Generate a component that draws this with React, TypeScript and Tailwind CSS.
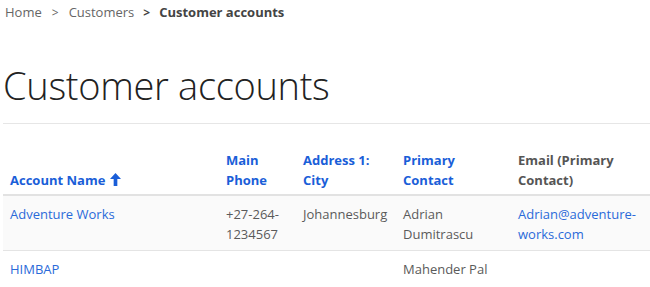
const rows = [
  {
    name: "Adventure Works",
    phone: ["+27-264-", "1234567"],
    city: "Johannesburg",
    contact: ["Adrian", "Dumitrascu"],
    email: ["Adrian@adventure-", "works.com"],
  },
  {
    name: "HIMBAP",
    phone: [],
    city: "",
    contact: ["Mahender Pal"],
    email: [],
  },
];

function SortUpIcon() {
  return (
    <svg viewBox="0 0 12 14" className="inline-block w-[11px] h-[13px] ml-[5px] -mt-[3px] align-middle" fill="currentColor">
      <path d="M6 0 L12 6.5 H8 V14 H4 V6.5 H0 Z" />
    </svg>
  );
}

export default function App() {
  return (
    <div className="w-[650px] h-[287px] overflow-hidden bg-white font-['Open_Sans','Noto_Sans',sans-serif]">
      {/* Breadcrumb */}
      <div className="flex items-center pl-[5px] pt-[3px] text-[13px] text-[#666]">
        <span>Home</span>
        <span className="mx-[10px] text-[12px]">&gt;</span>
        <span>Customers</span>
        <span className="mx-[9px] font-bold text-[12px] text-[#444]">&gt;</span>
        <span className="font-bold text-[#444]">Customer accounts</span>
      </div>

      {/* Title */}
      <h1 className="pl-[3px] mt-[39px] text-[38px] leading-[46px] font-light text-[#222] tracking-[-0.3px]">
        Customer accounts
      </h1>
      <div className="ml-[3px] mt-[15px] border-t border-[#e6e6e6]" />

      {/* Table */}
      <table className="ml-[3px] mt-[26px] w-[660px] border-collapse text-[13px] table-fixed">
        <colgroup>
          <col className="w-[216px]" />
          <col className="w-[77px]" />
          <col className="w-[100px]" />
          <col className="w-[115px]" />
          <col className="w-[152px]" />
        </colgroup>
        <thead>
          <tr className="border-b-2 border-[#e2e2e2] text-left align-bottom font-bold leading-[20px]">
            <th className="px-[7px] pb-[4px] text-[#1a5ed8]">
              Account Name
              <SortUpIcon />
            </th>
            <th className="px-[7px] pb-[4px] text-[#1a5ed8]">Main Phone</th>
            <th className="px-[7px] pb-[4px] text-[#1a5ed8]">Address 1: City</th>
            <th className="px-[7px] pb-[4px] text-[#1a5ed8]">Primary Contact</th>
            <th className="px-[7px] pb-[4px] text-[#555]">Email (Primary Contact)</th>
          </tr>
        </thead>
        <tbody>
          {rows.map((r, i) => (
            <tr
              key={r.name}
              className={`h-[55px] border-b border-[#e4e4e4] align-top leading-[20px] ${i === 0 ? "bg-[#fafafa]" : "bg-white"}`}
            >
              <td className="px-[7px] pt-[8px] pb-[6px] text-[#2a6ad9]">{r.name}</td>
              <td className="px-[7px] pt-[8px] pb-[6px] text-[#5a5a5a]">
                {r.phone.map((l) => (
                  <div key={l}>{l}</div>
                ))}
              </td>
              <td className="px-[7px] pt-[8px] pb-[6px] text-[#5a5a5a]">{r.city}</td>
              <td className="px-[7px] pt-[8px] pb-[6px] text-[#5a5a5a]">
                {r.contact.map((l) => (
                  <div key={l}>{l}</div>
                ))}
              </td>
              <td className="px-[7px] pt-[8px] pb-[6px] text-[#2a6ad9]">
                {r.email.map((l) => (
                  <div key={l}>{l}</div>
                ))}
              </td>
            </tr>
          ))}
        </tbody>
      </table>
    </div>
  );
}
